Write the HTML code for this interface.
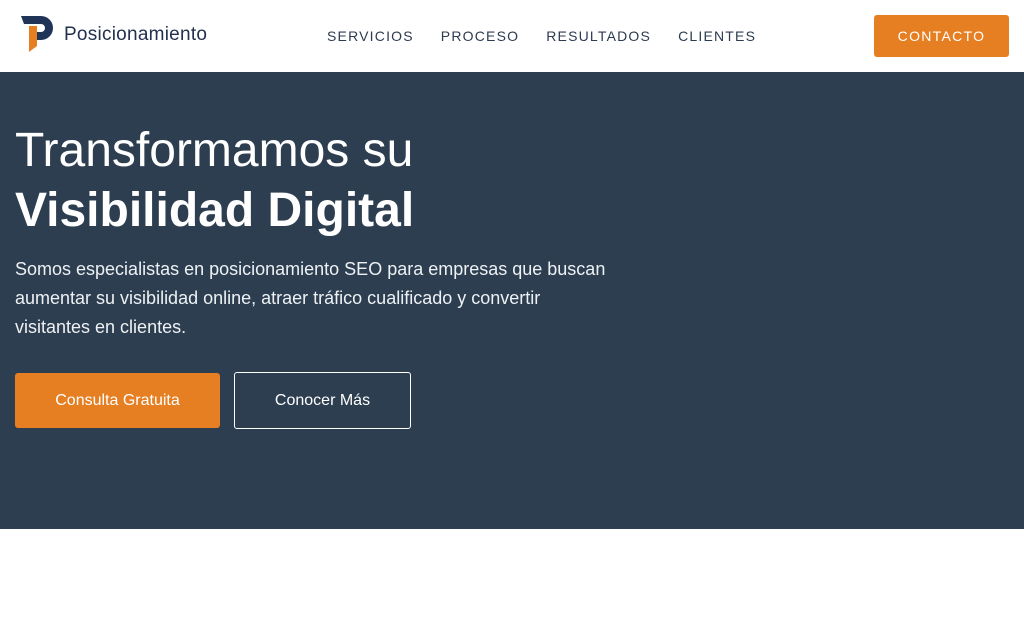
<!DOCTYPE html>
<html><head><meta charset="utf-8"><style>
*{margin:0;padding:0;box-sizing:border-box}
body{width:1024px;height:629px;background:#fff;font-family:"Liberation Sans",sans-serif;overflow:hidden}
header{height:72px;position:relative;background:#fff}
.logo{position:absolute;left:21px;top:16px}
.brand{position:absolute;left:64px;top:24px;font-size:19px;color:#22314d;letter-spacing:0.25px}
nav{position:absolute;left:327px;top:28px;font-size:14px;letter-spacing:1.2px;color:#2d3b50}
nav span{margin-right:27px}
.cta{position:absolute;left:874px;top:15px;width:135px;height:42px;background:#e67e22;color:#fff;border-radius:3px;font-size:14px;letter-spacing:1.3px;text-align:center;line-height:42px}
.hero{height:457px;background:#2c3e50;position:relative;color:#fff}
h1{position:absolute;left:15px;top:49px;font-size:48px;font-weight:normal;line-height:60px}
h1 b{font-weight:bold}
p{position:absolute;left:15px;top:183px;width:595px;font-size:18px;line-height:29px;color:#eef1f4}
.b1{position:absolute;left:15px;top:301px;width:205px;height:55px;background:#e67e22;border-radius:3px;font-size:16px;text-align:center;line-height:55px}
.b2{position:absolute;left:234px;top:300px;width:177px;height:57px;border:1px solid #fff;border-radius:3px;font-size:16px;text-align:center;line-height:55px}
</style></head><body>
<header>
<svg class="logo" width="34" height="36" viewBox="0 0 34 36"><path d="M0 0H20A12 12 0 0 1 20 24H16V16H20A4 4 0 0 0 20 8H3Z" fill="#1f3456"/><path d="M8 10H16V30L8 36Z" fill="#e67e22"/></svg>
<div class="brand">Posicionamiento</div>
<nav><span>SERVICIOS</span><span>PROCESO</span><span>RESULTADOS</span><span>CLIENTES</span></nav>
<div class="cta">CONTACTO</div>
</header>
<div class="hero">
<h1>Transformamos su<br><b>Visibilidad Digital</b></h1>
<p>Somos especialistas en posicionamiento SEO para empresas que buscan aumentar su visibilidad online, atraer tráfico cualificado y convertir visitantes en clientes.</p>
<div class="b1">Consulta Gratuita</div>
<div class="b2">Conocer Más</div>
</div>
</body></html>
